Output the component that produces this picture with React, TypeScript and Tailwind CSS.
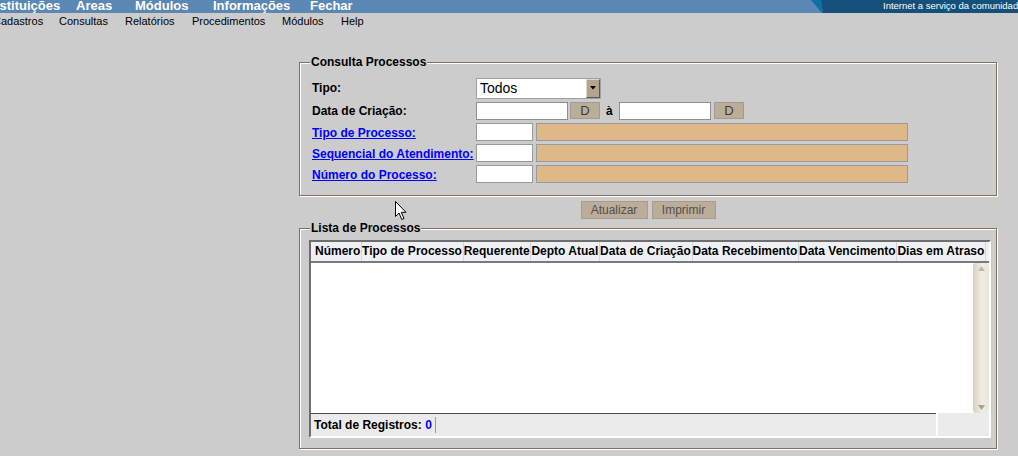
const topMenu = [
  { label: 'Instituições', w: 'w-[88px]' },
  { label: 'Areas', w: 'w-[59px]' },
  { label: 'Módulos', w: 'w-[78px]' },
  { label: 'Informações', w: 'w-[97px]' },
  { label: 'Fechar', w: 'w-[60px]' },
];

const subMenu = [
  { label: 'Cadastros', w: 'w-[66px]' },
  { label: 'Consultas', w: 'w-[66px]' },
  { label: 'Relatórios', w: 'w-[67px]' },
  { label: 'Procedimentos', w: 'w-[90px]' },
  { label: 'Módulos', w: 'w-[59px]' },
  { label: 'Help', w: 'w-[40px]' },
];

const columns = [
  'Número',
  'Tipo de Processo',
  'Requerente',
  'Depto Atual',
  'Data de Criação',
  'Data Recebimento',
  'Data Vencimento',
  'Dias em Atraso',
];

const DateButton = () => (
  <div className="w-[30px] h-[17px] bg-[#bcad96] border border-[#9c9c9c] text-[#3c3c3c] text-[13px] leading-[15px] text-center">
    D
  </div>
);

const LinkRow = ({ label }: { label: string }) => (
  <div className="flex items-center h-[21px]">
    <div className="w-[166px] pl-[2px]">
      <a className="text-[#0000ff] underline font-bold text-[12px]">{label}</a>
    </div>
    <div className="w-[57px] h-[18px] bg-white border border-[#9a9a9a]" />
    <div className="ml-[3px] w-[372px] h-[18px] bg-[#deb887] border border-[#9a9a9a]" />
  </div>
);

const App = () => {
  return (
    <div className="relative w-[1018px] h-[456px] overflow-hidden bg-[#cccccc] font-['Liberation_Sans',Arial,sans-serif] text-black">
      {/* top bar */}
      <div className="flex h-[13px] bg-[#5a87b3] overflow-hidden">
        <div className="flex flex-1 -ml-[12px] -mt-[2px]">
          {topMenu.map((m) => (
            <span key={m.label} className={`${m.w} shrink-0 text-white font-bold text-[13px] leading-[15px] whitespace-nowrap`}>
              {m.label}
            </span>
          ))}
        </div>
        <svg width="12" height="13" viewBox="0 0 12 13" className="shrink-0">
          <polygon points="0,0 10,0 12,13 11,13" fill="#0b72a6" />
          <polygon points="10,0 12,0 12,13" fill="#14507a" />
        </svg>
        <div className="w-[195px] shrink-0 bg-[#14507a] pl-[60px] text-white text-[9.5px] leading-[11px] whitespace-nowrap">
          Internet a serviço da comunidade
        </div>
      </div>

      {/* sub menu */}
      <div className="flex h-[17px] items-center -ml-[7px]">
        {subMenu.map((m) => (
          <span key={m.label} className={`${m.w} shrink-0 text-[11px] whitespace-nowrap`}>
            {m.label}
          </span>
        ))}
      </div>

      <div className="ml-[299px] w-[698px] mt-[25px]">
        {/* Consulta Processos */}
        <fieldset className="border border-[#7a7161] shadow-[inset_1px_1px_0_#fff,1px_1px_0_#fff] pl-[10px] pb-[11px]">
          <legend className="px-[1px] bg-[#cccccc] font-bold text-[12px] leading-[14px]">Consulta Processos</legend>
          <div className="pt-[7px]">
            <div className="flex items-center h-[24px]">
              <div className="w-[166px] pl-[2px] font-bold text-[12px]">Tipo:</div>
              <div className="flex w-[125px] h-[21px] bg-white border border-[#a0a0a0]">
                <span className="flex-1 pl-[3px] text-[14px] leading-[19px]">Todos</span>
                <div className="w-[14px] h-[19px] bg-[#b4a48d] border-r border-b border-[#5c574f] border-l border-l-[#ddd6cb] border-t border-t-[#ddd6cb] flex items-center justify-center">
                  <svg width="6" height="4" viewBox="0 0 6 4">
                    <polygon points="0,0 6,0 3,3.5" fill="#000" />
                  </svg>
                </div>
              </div>
            </div>
            <div className="flex items-center h-[21px]">
              <div className="w-[166px] pl-[2px] font-bold text-[12px]">Data de Criação:</div>
              <div className="w-[92px] h-[18px] bg-white border border-[#8f8f8f]" />
              <div className="ml-[2px]">
                <DateButton />
              </div>
              <span className="ml-[6px] w-[7px] text-[12px] font-bold">à</span>
              <div className="ml-[6px] w-[92px] h-[18px] bg-white border border-[#8f8f8f]" />
              <div className="ml-[3px]">
                <DateButton />
              </div>
            </div>
            <LinkRow label="Tipo de Processo:" />
            <LinkRow label="Sequencial do Atendimento:" />
            <LinkRow label="Número do Processo:" />
          </div>
        </fieldset>

        {/* buttons */}
        <div className="flex justify-center gap-[4px] mt-[5px]">
          <div className="w-[67px] h-[18px] bg-[#bcad98] border border-[#a79d8f] text-[#4f4f4f] text-[12px] leading-[16px] text-center">
            Atualizar
          </div>
          <div className="w-[64px] h-[18px] bg-[#bcad98] border border-[#a79d8f] text-[#4f4f4f] text-[12px] leading-[16px] text-center">
            Imprimir
          </div>
        </div>

        {/* Lista de Processos */}
        <fieldset className="mt-[2px] border border-[#7a7161] shadow-[inset_1px_1px_0_#fff,1px_1px_0_#fff] pl-[9px] pb-[10px]">
          <legend className="ml-[1px] px-[1px] bg-[#cccccc] font-bold text-[12px] leading-[14px]">Lista de Processos</legend>
          <div className="mt-[5px] w-[682px] border-2 border-t-[#6e6e6e] border-l-[#6e6e6e] border-r-white border-b-white">
            <div className="flex h-[21px] items-center bg-[#eff0f3] border-b-2 border-[#7a7a7a] pl-[4px] overflow-hidden">
              {columns.map((c) => (
                <span key={c} className="shrink-0 font-bold text-[12px] whitespace-nowrap pr-[0.75px] border-r border-[#d6d6d6] leading-[19px]">
                  {c}
                </span>
              ))}
            </div>
            <div className="flex h-[150px] bg-white">
              <div className="flex-1" />
              <div className="w-[16px] flex flex-col justify-between items-center rounded-[3px] bg-[linear-gradient(to_right,#d9cfbe,#f1ece4_55%,#ebe5da)] py-[3px]">
                <svg width="7" height="5" viewBox="0 0 7 5">
                  <polygon points="0,5 7,5 3.5,0" fill="#c0b8ac" />
                </svg>
                <svg width="7" height="5" viewBox="0 0 7 5">
                  <polygon points="0,0 7,0 3.5,5" fill="#a8a092" />
                </svg>
              </div>
            </div>
            <div className="flex h-[23px] bg-[#ebebeb]">
              <div className="w-[625px] flex items-center border-t border-[#4a4a4a] pl-[3px]">
                <span className="font-bold text-[12px]">
                  Total de Registros: <span className="text-[#0000ff]">0</span>
                </span>
                <span className="ml-[3px] h-[16px] border-l border-[#9a9a9a]" />
              </div>
              <div className="w-[2px] bg-white" />
              <div className="flex-1" />
            </div>
          </div>
        </fieldset>
      </div>

      {/* mouse pointer */}
      <svg className="absolute left-[395px] top-[201px]" width="13" height="20" viewBox="0 0 13 20">
        <path d="M0.5 0.5 L0.5 15.5 L4 12 L6.8 18.5 L9 17.5 L6.3 11.3 L11 11.3 Z" fill="#fff" stroke="#000" strokeWidth="1" />
      </svg>
    </div>
  );
};

export default App;
